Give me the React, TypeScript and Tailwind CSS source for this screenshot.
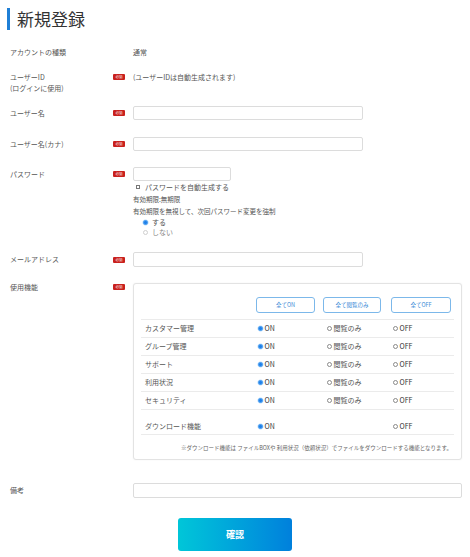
import React from "react";

const font = { fontFamily: '"Noto Sans CJK JP", "Noto Sans", sans-serif' };

function Badge() {
  return (
    <span className="flex h-[6px] w-[12px] items-center justify-center rounded-[1px] bg-[#c9201d] text-[3.5px] leading-none text-white">
      必須
    </span>
  );
}

function Radio({ on, light }: { on?: boolean; light?: boolean }) {
  if (on)
    return (
      <span className="inline-block h-[5px] w-[5px] shrink-0 rounded-full border border-[#4c9ff0] bg-[#1f80ea] shadow-[0_0_0_0.5px_#bcdcfa]" />
    );
  return (
    <span
      className={
        "inline-block h-[5px] w-[5px] shrink-0 rounded-full border bg-white " +
        (light ? "border-[#cfcfcf]" : "border-[#8a8a8a]")
      }
    />
  );
}

function Row({
  label,
  required,
  children,
  className,
  labelClass,
  badgeClass,
}: {
  label: React.ReactNode;
  required?: boolean;
  children?: React.ReactNode;
  className?: string;
  labelClass?: string;
  badgeClass?: string;
}) {
  return (
    <div className={"flex pl-[10px] pr-[8px] " + (className || "")}>
      <div className={"w-[103px] shrink-0 text-[7px] text-[#555] " + (labelClass || "")}>{label}</div>
      <div className={"w-[20px] shrink-0 " + (badgeClass || "")}>{required && <Badge />}</div>
      <div className="min-w-0 flex-1">{children}</div>
    </div>
  );
}

const features: { name: string }[] = [
  { name: "カスタマー管理" },
  { name: "グループ管理" },
  { name: "サポート" },
  { name: "利用状況" },
  { name: "セキュリティ" },
];

export default function App() {
  return (
    <div className="h-[557px] w-[470px] overflow-hidden bg-white" style={font}>
      {/* header */}
      <div className="mt-[8px] flex h-[22px] items-center pl-[7px]">
        <div className="h-[22px] w-[3px] bg-[#1f7fd6]" />
        <div className="ml-[7px] text-[17px] leading-[22px] text-[#333]">新規登録</div>
      </div>

      <Row label="アカウントの種類" className="mt-[17px] leading-[10px]">
        <div className="text-[7px] leading-[10px] text-[#555]">通常</div>
      </Row>

      <Row
        label={
          <>
            <div>ユーザーID</div>
            <div>(ログインに使用)</div>
          </>
        }
        required
        className="mt-[15px]"
        labelClass="leading-[11px]"
        badgeClass="pt-[2px]"
      >
        <div className="text-[7px] leading-[11px] text-[#555]">(ユーザーIDは自動生成されます)</div>
      </Row>

      <Row label="ユーザー名" required className="mt-[12px]" labelClass="leading-[14px]" badgeClass="pt-[4px]">
        <div className="h-[14px] w-[230px] rounded-[2px] border border-[#dcdcdc] bg-white" />
      </Row>

      <Row label="ユーザー名(カナ)" required className="mt-[17px]" labelClass="leading-[14px]" badgeClass="pt-[4px]">
        <div className="h-[14px] w-[230px] rounded-[2px] border border-[#dcdcdc] bg-white" />
      </Row>

      <Row label="パスワード" required className="mt-[16px]" labelClass="leading-[14px]" badgeClass="pt-[4px]">
        <div className="h-[14px] w-[98px] rounded-[2px] border border-[#dcdcdc] bg-white" />
        <div className="flex h-[12px] items-center pl-[3px] text-[7px] text-[#555]">
          <span className="inline-block h-[4px] w-[4px] border border-[#777] bg-white" />
          <span className="ml-[5px]">パスワードを自動生成する</span>
        </div>
        <div className="h-[12px] text-[6.5px] leading-[12px] text-[#555]">有効期限:無期限</div>
        <div className="h-[12px] text-[6.5px] leading-[12px] text-[#555]">有効期限を無視して、次回パスワード変更を強制</div>
        <div className="flex h-[10px] items-center pl-[10px] text-[7px] text-[#555]">
          <Radio on />
          <span className="ml-[4px]">する</span>
        </div>
        <div className="flex h-[10px] items-center pl-[10px] text-[7px] text-[#888]">
          <Radio light />
          <span className="ml-[4px]">しない</span>
        </div>
      </Row>

      <Row label="メールアドレス" required className="mt-[15px]" labelClass="leading-[15px]" badgeClass="pt-[5px]">
        <div className="h-[15px] w-[230px] rounded-[2px] border border-[#dcdcdc] bg-white" />
      </Row>

      <Row label="使用機能" required className="mt-[16px]" labelClass="leading-[8px]" badgeClass="pt-[1px]">
        <div className="h-[177px] rounded-[3px] border border-[#e3e3e3] bg-white px-[7px] pt-[13px] shadow-[0_0_2px_rgba(0,0,0,0.06)]">
          <div className="flex h-[16px]">
            <div className="w-[115px] shrink-0" />
            <div className="w-[67px] shrink-0">
              <div className="flex h-[16px] w-[59px] items-center justify-center rounded-[3px] border border-[#7cb8ea] text-[5.5px] text-[#3a8ad6]">
                全てON
              </div>
            </div>
            <div className="w-[68px] shrink-0">
              <div className="flex h-[16px] w-[58px] items-center justify-center rounded-[3px] border border-[#7cb8ea] text-[5.5px] text-[#3a8ad6]">
                全て閲覧のみ
              </div>
            </div>
            <div className="flex-1">
              <div className="flex h-[16px] w-[60px] items-center justify-center rounded-[3px] border border-[#7cb8ea] text-[5.5px] text-[#3a8ad6]">
                全てOFF
              </div>
            </div>
          </div>
          <div className="mt-[6px] border-t border-[#ebebeb]">
            {features.map((f) => (
              <div key={f.name} className="flex h-[18px] items-center border-b border-[#ebebeb] text-[7px] text-[#555]">
                <div className="w-[115px] shrink-0 pl-[4px]">{f.name}</div>
                <div className="flex w-[67px] shrink-0 items-center pl-[2px]">
                  <Radio on />
                  <span className="ml-[1.5px] text-[#333]">ON</span>
                </div>
                <div className="flex w-[68px] shrink-0 items-center pl-[4px]">
                  <Radio />
                  <span className="ml-[1.5px]">閲覧のみ</span>
                </div>
                <div className="flex flex-1 items-center pl-[2px]">
                  <Radio />
                  <span className="ml-[1.5px] text-[#333]">OFF</span>
                </div>
              </div>
            ))}
            <div className="h-[25px] border-b border-[#ebebeb] pt-[8px]">
              <div className="flex h-[16px] items-center text-[7px] text-[#555]">
                <div className="w-[115px] shrink-0 pl-[4px]">ダウンロード機能</div>
                <div className="flex w-[67px] shrink-0 items-center pl-[2px]">
                  <Radio on />
                  <span className="ml-[1.5px] text-[#333]">ON</span>
                </div>
                <div className="w-[68px] shrink-0" />
                <div className="flex flex-1 items-center pl-[2px]">
                  <Radio />
                  <span className="ml-[1.5px] text-[#333]">OFF</span>
                </div>
              </div>
            </div>
          </div>
          <div className="mt-[9px] pr-[2px] text-right text-[5.5px] leading-[8px] text-[#666]">
            ※ダウンロード機能は ファイルBOXや 利用状況（依頼状況）でファイルをダウンロードする機能となります。
          </div>
        </div>
      </Row>

      <Row label="備考" className="mt-[23px]" labelClass="leading-[15px]">
        <div className="h-[15px] w-full rounded-[2px] border border-[#dcdcdc] bg-white" />
      </Row>

      <div className="mt-[20px] flex justify-center">
        <div className="flex h-[33px] w-[114px] items-center justify-center rounded-[3px] bg-gradient-to-r from-[#00c6d8] to-[#0080dc] text-[9px] font-bold text-white">
          確認
        </div>
      </div>
    </div>
  );
}
